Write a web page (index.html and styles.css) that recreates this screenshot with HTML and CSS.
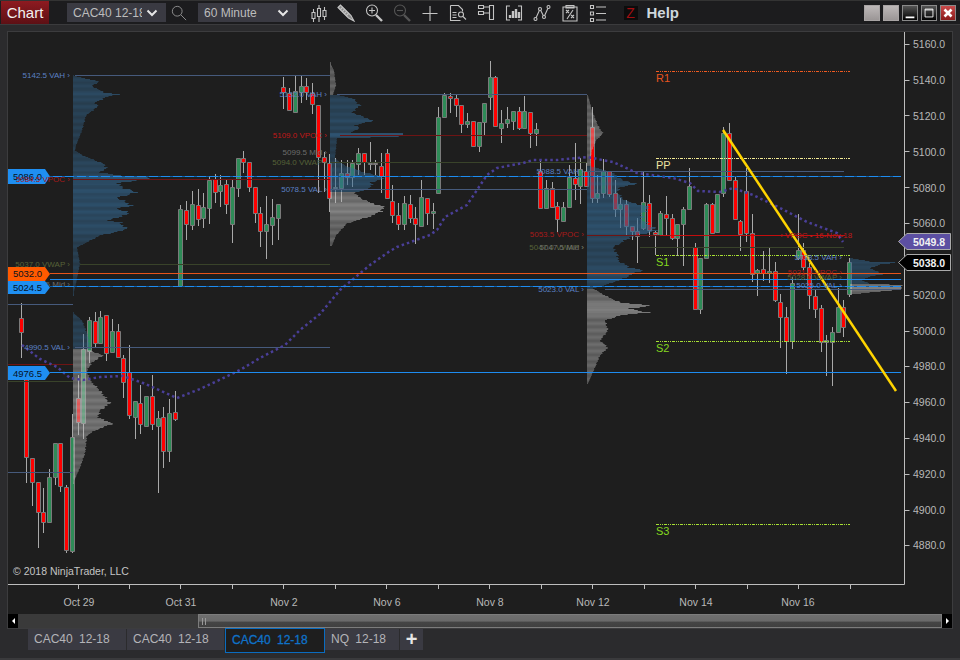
FILE: index.html
```html
<!DOCTYPE html>
<html lang="en">
<head>
<meta charset="utf-8">
<title>Chart</title>
<link rel="stylesheet" href="styles.css">
</head>
<body>
<div class="app">
  <header class="titlebar">
    <div class="brand">Chart</div>
    <div class="select sel-inst"><span class="sel-text">CAC40 12-18</span><svg class="chev" viewBox="0 0 12 8"><path d="M1.5 1.5 6 6l4.500-4.500"/></svg></div>
    <svg class="ico search" viewBox="0 0 18 18"><circle cx="7" cy="7" r="5.500"/><path d="M11 11l6 6"/></svg>
    <div class="select sel-int"><span class="sel-text">60 Minute</span><svg class="chev" viewBox="0 0 12 8"><path d="M1.5 1.5 6 6l4.500-4.500"/></svg></div>
    <div class="tools">
      <svg class="ico" viewBox="0 0 18 18"><path d="M4.500 5v13M10 1v17M15.500 3v13"/><path class="bg" d="M3 8.500h3v6H3zM8.500 4.500h3v8h-3zM14 6.500h3v6h-3z"/></svg>
      <svg class="ico" viewBox="0 0 18 18"><path class="pen" d="M1 3.500 3.500 1 14 11.500 17 17l-5.500-3z"/><path d="M3 6l3-3M5 8l3-3M7 10l3-3M9 12l3-3"/></svg>
      <svg class="ico" viewBox="0 0 18 18"><circle cx="7" cy="6.500" r="5.500"/><path d="M4 6.500h6M7 3.500v6"/><path class="thick" d="M11 11l6 6"/></svg>
      <svg class="ico dim" viewBox="0 0 18 18"><circle cx="7" cy="6.500" r="5.500"/><path d="M4 6.500h6"/><path class="thick" d="M11 11l6 6"/></svg>
      <svg class="ico" viewBox="0 0 18 18"><path d="M1.500 9.500h15M9 2v15"/></svg>
      <svg class="ico" viewBox="0 0 18 18"><path d="M1.500 1.500h8l4 4v2M1.500 1.500v15h10M3.500 8.500h4M3.500 11h4M3.500 13.500h4"/><circle cx="12" cy="10.500" r="2.500"/><path d="M14 12.500l3 3"/></svg>
      <svg class="ico" viewBox="0 0 18 18"><path d="M1.500 1.500h5v3h-5zM1.500 7.500h5v3h-5zM6.500 3h6M6.500 9h6M12.500 1.500h4v14h-4z"/></svg>
      <svg class="ico" viewBox="0 0 18 18"><path d="M5 2H1.500v14H5M13 2h3.500v14H13"/><path class="thick" d="M5 14v-3M8 14V7M11 14V5M14 14V8"/></svg>
      <svg class="ico" viewBox="0 0 18 18"><path d="M2.500 15 7 5l4 8 4.500-10"/><circle class="bg" cx="2.500" cy="15" r="1.500"/><circle class="bg" cx="7" cy="5" r="1.500"/><circle class="bg" cx="11" cy="13" r="1.500"/><circle class="bg" cx="15.500" cy="3" r="1.500"/></svg>
      <svg class="ico" viewBox="0 0 18 18"><path d="M2 3h14v14H2zM5 1.500h8V4H5zM5 6l3 3M8 6 5 9M10 11l3 3M13 11l-3 3M12 6l-6 9"/></svg>
      <svg class="ico" viewBox="0 0 18 18"><path d="M1.500 1.500h3v3h-3zM1.500 8h3v3h-3zM1.500 14.500h3v3h-3zM7 3h10M7 9.500h10M7 16h10"/></svg>
    </div>
    <div class="zbox">Z</div>
    <div class="help">Help</div>
    <div class="winbtns">
      <span class="wbtn gray"></span>
      <span class="wbtn gray"></span>
      <span class="wbtn dark"><svg viewBox="0 0 16 16"><path class="wmin" d="M3 12h10v2H3z"/></svg></span>
      <span class="wbtn dark"><svg viewBox="0 0 16 16"><path class="wmax" d="M3.500 3.500h9v9h-9zM3.500 4.500h9"/></svg></span>
      <span class="wbtn red"><svg viewBox="0 0 16 16"><path class="wx" d="M4 4l8 8M12 4l-8 8"/></svg></span>
    </div>
  </header>

  <section class="panel">
    <svg class="chart" viewBox="8 32 944 582" width="944" height="582">
      <g id="candles"></g>
      <g id="profiles"></g>

      <!-- session levels -->
      <path class="ln vah" d="M75 75.500H330M337 94.500H587M8 304.500H73M8 472.500H73M75 347.500H330M330 189.500H587M587 171.500H844M605 289.500H901"/>
      <path class="ln vpoc" d="M73 179.500H330M340 135.500H587M8 364.500H73M587 235.500H660"/>
      <path class="ln vpoc-live" d="M660 235.500H845"/>
      <path class="ln vwap" d="M80 264.500H330M330 162.500H587M8 381.500H73M640 247.500H844"/>

      <!-- pivots -->
      <path class="piv r1" d="M656 71.500H850"/>
      <path class="piv pp" d="M656 158.500H850"/>
      <path class="piv s" d="M656 255.500H850M656 341.500H850M656 524.500H850"/>
      <text class="pivt r1t" x="656" y="82">R1</text>
      <text class="pivt ppt" x="656" y="169">PP</text>
      <text class="pivt st" x="656" y="266">S1</text>
      <text class="pivt st" x="656" y="352">S2</text>
      <text class="pivt st" x="656" y="535">S3</text>

      <!-- moving average -->
      <path class="sma" d="M22 345 40 359 57 367 70 378 83 380 100 377 123 376 143 383 177 398 200 389 215 382 240 370 260 358 285 345 300 330 320 314 340 290 370 265 390 251 397 247 430 235 437 230 445 217 467 205 477 190 487 175 497 168 523 163 533 160 557 160 587 157 613 162 637 173 673 178 690 183 698 191 720 192 733 188 753 195 780 208 807 222 837 233 843 242"/>

      <!-- labels under the flags -->
      <text class="lbl mid" x="70" y="287">5024.5 Mid ›</text>

      <!-- price lines -->
      <path class="ln blue" d="M50 176.500H901"/>
      <path class="ln bluedash" d="M50 176.500H901"/>
      <path class="ln orange" d="M50 273.500H901"/>
      <path class="ln blue" d="M50 279.500H901"/>
      <path class="ln blue" d="M50 286.500H901"/>
      <path class="ln bluedash" d="M50 286.500H901"/>
      <path class="ln blue" d="M50 372.500H901"/>

      <!-- trend line -->
      <path class="trend" d="M723 130 896 391"/>

      <!-- left flags -->
      <path class="flag fblue" d="M8 169H45L50 176.500 45 184H8z"/>
      <text class="ftext" x="13" y="180">5086.0</text>
      <path class="flag forange" d="M8 267H45L50 274 45 281H8z"/>
      <text class="ftext" x="13" y="277">5032.0</text>
      <path class="flag fblue" d="M8 281H45L50 287.500 45 294H8z"/>
      <text class="ftext" x="13" y="291">5024.5</text>
      <path class="flag fblue" d="M8 366H45L50 373 45 380H8z"/>
      <text class="ftext" x="13" y="377">4976.5</text>

      <!-- profile labels -->
      <text class="lbl val" x="70" y="78">5142.5 VAH ›</text>
      <text class="lbl poc" x="70" y="182">5084.5 VPOC ›</text>
      <text class="lbl wap" x="70" y="267">5037.0 VWAP ›</text>
      <text class="lbl val" x="70" y="350">4990.5 VAL ›</text>
      <text class="lbl val" x="327" y="97">5132.0 VAH ›</text>
      <text class="lbl pocb" x="327" y="138">5109.0 VPOC ›</text>
      <text class="lbl mid" x="327" y="155">5099.5 Mid ›</text>
      <text class="lbl wap" x="327" y="165">5094.0 VWAP ›</text>
      <text class="lbl val" x="327" y="192">5078.5 VAL ›</text>
      <text class="lbl val" x="584" y="174">5088.5 VAH ›</text>
      <text class="lbl poc" x="584" y="237">5053.5 VPOC ›</text>
      <text class="lbl wap" x="584" y="250">5047.0 VWAP ›</text>
      <text class="lbl mid" x="584" y="250">5047.5 Mid ›</text>
      <text class="lbl val" x="584" y="292">5023.0 VAL ›</text>
      <text class="lbl val" x="842" y="260">5038.5 VAH ›</text>
      <text class="lbl poc" x="842" y="275">5031.0 VPOC ›</text>
      <text class="lbl wap" x="842" y="280">5028.0 VWAP ›</text>
      <text class="lbl val" x="842" y="288">5025.0 VAL ›</text>
      <text class="lbl pocb nov" x="780" y="238">‹ VPOC • 16-Nov-18</text>

      <text class="copy" x="13" y="575">© 2018 NinjaTrader, LLC</text>

      <!-- price axis -->
      <path class="axis" d="M904.500 32V584.500H8"/>
      <path class="axis" d="M904.500 44.500h5M904.500 80.500h5M904.500 115.500h5M904.500 151.500h5M904.500 187.500h5M904.500 223.500h5M904.500 295.500h5M904.500 331.500h5M904.500 366.500h5M904.500 402.500h5M904.500 438.500h5M904.500 474.500h5M904.500 510.500h5M904.500 545.500h5"/>
      <text class="ax" x="913" y="48">5160.0</text>
      <text class="ax" x="913" y="84">5140.0</text>
      <text class="ax" x="913" y="120">5120.0</text>
      <text class="ax" x="913" y="156">5100.0</text>
      <text class="ax" x="913" y="192">5080.0</text>
      <text class="ax" x="913" y="227">5060.0</text>
      <text class="ax" x="913" y="299">5020.0</text>
      <text class="ax" x="913" y="335">5000.0</text>
      <text class="ax" x="913" y="370">4980.0</text>
      <text class="ax" x="913" y="406">4960.0</text>
      <text class="ax" x="913" y="442">4940.0</text>
      <text class="ax" x="913" y="478">4920.0</text>
      <text class="ax" x="913" y="514">4900.0</text>
      <text class="ax" x="913" y="549">4880.0</text>

      <!-- right flags -->
      <path class="flag fpurple" d="M907 233.500H950.500V249.500H907L898.500 241.500z"/>
      <text class="fr" x="913" y="245.500">5049.8</text>
      <path class="flag fblack" d="M907 254.500H950.500V270.500H907L898.500 262.500z"/>
      <text class="fr" x="913" y="266.500">5038.0</text>

      <!-- time axis -->
      <path class="axis" d="M78.500 584v5M129.500 584v5M180.500 584v5M232.500 584v5M283.500 584v5M335.500 584v5M386.500 584v5M438.500 584v5M489.500 584v5M541.500 584v5M592.500 584v5M644.500 584v5M695.500 584v5M747.500 584v5M798.500 584v5M850.500 584v5"/>
      <text class="tx" x="79" y="606">Oct 29</text>
      <text class="tx" x="181" y="606">Oct 31</text>
      <text class="tx" x="284" y="606">Nov 2</text>
      <text class="tx" x="387" y="606">Nov 6</text>
      <text class="tx" x="490" y="606">Nov 8</text>
      <text class="tx" x="593" y="606">Nov 12</text>
      <text class="tx" x="696" y="606">Nov 14</text>
      <text class="tx" x="798" y="606">Nov 16</text>
    </svg>
    <div class="scrollbar">
      <span class="sbtn"><i class="tri-l"></i></span>
      <span class="track"></span>
      <span class="thumb"><i class="grip"></i></span>
      <span class="sbtn"><i class="tri-r"></i></span>
    </div>
  </section>

  <nav class="tabs">
    <div class="tab t1">CAC40 12-18</div>
    <div class="tab t2">CAC40 12-18</div>
    <div class="tab t3 active">CAC40 12-18</div>
    <div class="tab t4">NQ 12-18</div>
    <div class="tab add">+</div>
  </nav>
</div>
<script src="chart.js"></script>
</body>
</html>
```

FILE: styles.css
```css
* { box-sizing: border-box; }
html, body { margin: 0; padding: 0; }
body { width: 960px; height: 660px; overflow: hidden; background: #2b2b2d; font-family: "Liberation Sans", Arial, sans-serif; }
.app { display: flex; flex-direction: column; width: 960px; height: 660px; border-bottom: 2px solid #3a3a3c; }

.titlebar { display: flex; align-items: center; height: 25px; background: #1c1c1e; border-top: 1px solid #333; border-bottom: 1px solid #3b3b3d; padding-left: 1px; flex: none; }
.brand { width: 48px; height: 23px; background: linear-gradient(#8e1a20, #5d1015); color: #f2f2f2; font-size: 15px; line-height: 23px; text-align: center; }
.select { display: flex; align-items: center; justify-content: space-between; width: 99px; height: 19px; background: #3a3a42; color: #bdbdbd; font-size: 12px; padding: 0 6px; }
.sel-inst { margin-left: 18px; }
.sel-int { margin-left: 11px; }
.sel-text { display: block; width: 69px; overflow: hidden; white-space: nowrap; }
.chev { width: 12px; height: 8px; flex: none; margin-right: 2px; }
.chev path { fill: none; stroke: #e6e6e6; stroke-width: 2; }

.ico { width: 18px; height: 18px; flex: none; }
.ico path, .ico circle { fill: none; stroke: #c4c4c4; stroke-width: 1.1; }
.ico .bg { fill: #1c1c1e; }
.ico .pen { fill: #8b8b8b; }
.ico .thick { stroke-width: 2.4; }
.ico.dim path, .ico.dim circle { stroke: #555; }
.search { width: 16px; height: 16px; margin-left: 5px; }
.search path, .search circle { stroke: #8c8c8c; }
.tools { display: flex; gap: 10px; margin-left: 11.5px; }

.zbox { width: 14px; height: 14px; margin-left: 17px; background: #0c0c0c; color: #a00f12; font-size: 14px; line-height: 14px; text-align: center; }
.help { margin-left: 9px; color: #cfd7dd; font-size: 15px; font-weight: bold; }
.winbtns { display: flex; gap: 3px; margin-left: auto; margin-right: 4px; }
.wbtn { display: block; width: 16px; height: 16px; border: 1px solid #8a8a8a; }
.wbtn svg { display: block; width: 14px; height: 14px; }
.gray { background: linear-gradient(#bdb8b8, #9b9696); border-color: #a8a4a4; }
.dark { background: linear-gradient(#555, #000); }
.red { background: linear-gradient(#c94a4a, #8a1c1c); }
.wmin { fill: #fff; }
.wmax { fill: none; stroke: #fff; stroke-width: 1; }
.wx { fill: none; stroke: #fff; stroke-width: 3; }

.panel { margin: 6px 7px 0 7px; border: 1px solid #3c3c3e; background: #1e1e1e; height: 598px; flex: none; display: flex; flex-direction: column; }
.chart { display: block; width: 944px; height: 582px; flex: none; }
.scrollbar { display: flex; height: 14px; background: #3a3a3a; flex: none; }
.sbtn { display: flex; align-items: center; justify-content: center; width: 10px; background: #000; flex: none; }
.tri-l, .tri-r { display: block; width: 0; height: 0; border-top: 3px solid transparent; border-bottom: 3px solid transparent; }
.tri-l { border-right: 3px solid #fff; }
.tri-r { border-left: 3px solid #fff; }
.track { width: 180px; flex: none; }
.thumb { flex: 1; background: linear-gradient(#6f6f6f, #6a6a6a 50%, #454545 60%, #404040); border: 1px solid #7c7c7c; position: relative; }
.grip { position: absolute; left: 3px; top: 3px; width: 4px; height: 7px; border-left: 1px solid #999; border-right: 1px solid #999; }

.tabs { display: flex; align-items: flex-start; gap: 1px; padding-left: 28px; }
.tab { height: 21px; background: #3a3a42; color: #b4b4b8; font-size: 12px; line-height: 21px; padding-left: 6px; white-space: nowrap; word-spacing: 3px; }
.t1 { width: 98px; }
.t2 { width: 97px; }
.t3 { width: 100px; }
.t4 { width: 74px; margin-left: -1px; }
.active { height: 25px; margin-top: -1px; background: #1e1e1e; border: 1px solid #0a6cc0; color: #0f72c8; line-height: 22px; -webkit-text-stroke: .3px #0f72c8; }
.add { width: 23px; padding: 0; text-align: center; color: #e6e6e6; font-size: 20px; font-weight: bold; }

/* chart drawing */
.wick { fill: none; stroke: #a9a9a9; stroke-width: 1; }
.up { fill: #2e8b57; stroke: #7a7a7a; stroke-width: 1; }
.dn { fill: #ff0000; stroke: #7a7a7a; stroke-width: 1; }
.pblue { fill: #356a94; }
.pgray { fill: #bcbcbc; }
.ln { fill: none; stroke-width: 1; }
.vah { stroke: #465a7c; }
.vpoc { stroke: #6e1414; }
.vpoc-live { stroke: #c40d0d; }
.vwap { stroke: #39432a; }
.blue { stroke: #1e8cf0; }
.bluedash { stroke: #0d5fa8; stroke-dasharray: 3 9; }
.orange { stroke: #e8541a; }
.piv { fill: none; stroke-width: 1; stroke-dasharray: 3 1 1 1 1 1; }
.r1 { stroke: #f05a20; }
.pp { stroke: #f4ec94; }
.s { stroke: #a8e034; }
.pivt { font-size: 11px; font-family: "Liberation Sans", Arial, sans-serif; }
.r1t { fill: #e8541e; }
.ppt { fill: #eee2a0; }
.st { fill: #84d61e; }
.sma { fill: none; stroke: #4a3f98; stroke-width: 2.5; stroke-dasharray: 2.500 3; }
.trend { fill: none; stroke: #ffd400; stroke-width: 2.5; }
.lbl { font-size: 8px; text-anchor: end; font-family: "Liberation Sans", Arial, sans-serif; }
.nov { text-anchor: start; }
.val { fill: #5b80c4; }
.poc { fill: #a81a1a; }
.pocb { fill: #c01818; }
.wap { fill: #566238; }
.mid { fill: #6c6c6c; }
.flag { stroke: none; }
.fblue { fill: #1f8ff2; }
.forange { fill: #ff5a00; }
.fpurple { fill: #5c4fa2; stroke: #aaa; }
.fblack { fill: #000; stroke: #aaa; }
.ftext { font-size: 9.500px; fill: #06121f; font-family: "Liberation Sans", Arial, sans-serif; }
.fr { font-size: 10.500px; font-weight: bold; fill: #f2f2f2; font-family: "Liberation Sans", Arial, sans-serif; }
.axis { fill: none; stroke: #bdbdbd; stroke-width: 1; }
.ax { font-size: 10.500px; fill: #b8b8b8; font-family: "Liberation Sans", Arial, sans-serif; }
.tx { font-size: 10.500px; fill: #b8b8b8; text-anchor: middle; font-family: "Liberation Sans", Arial, sans-serif; }
.copy { font-size: 10.500px; fill: #c4c4c4; font-family: "Liberation Sans", Arial, sans-serif; }
```

FILE: chart.js
```js
// x, direction (1 up/green, 0 down/red), wick top, body top, body bottom, wick bottom
var BARS = [
[21,0,303,318,332,358],[26,0,375,378,457,483],[32,0,458,458,482,506],[38,0,482,482,512,548],[43,0,488,512,522,533],[49,1,469,477,522,522],[55,1,443,443,477,485],[60,0,443,443,486,492],[66,0,485,487,550,553],[72,1,414,437,551,553],[78,0,375,398,422,435],[83,1,334,349,423,439],[89,1,317,320,351,363],[95,0,312,321,343,347],[100,1,311,317,343,343],[106,0,315,315,353,361],[112,1,319,331,352,352],[118,0,324,331,357,357],[123,0,355,358,382,398],[129,0,345,372,415,419],[135,1,401,401,417,439],[140,0,385,403,424,434],[146,1,396,396,426,426],[152,0,375,396,424,430],[158,1,411,418,426,493],[163,0,407,417,451,468],[169,1,399,413,451,462],[175,0,391,412,419,421],
[180,1,205,209,286,287],[186,0,201,210,224,240],[192,1,191,204,225,230],[198,0,189,205,219,226],[203,1,193,207,218,228],[209,1,177,180,208,224],[215,0,174,179,192,203],[220,1,175,185,191,207],[226,0,180,184,204,214],[232,1,180,187,224,243],[238,1,158,158,188,197],[243,0,151,158,162,173],[249,0,162,162,187,192],[255,0,187,187,213,223],[260,0,207,213,231,247],[266,1,196,224,231,259],[272,1,199,217,225,245],[278,1,204,204,218,240],
[283,0,77,87,92,109],[289,0,88,93,110,110],[295,1,76,91,112,112],[301,1,76,86,92,103],[306,0,78,86,92,100],[312,0,83,93,104,114],[318,0,105,105,157,193],[324,0,152,157,162,192],[329,0,154,163,198,212],[335,1,158,187,188,203],[341,1,160,173,188,202],[347,0,160,173,177,185],[352,1,160,163,177,187],[358,1,148,153,164,175],[364,0,153,153,162,175],[370,1,142,163,164,170],[375,0,160,163,164,175],[381,0,153,166,176,193],[387,0,149,153,198,198],[392,0,185,201,215,223],[398,0,203,215,224,230],[404,1,196,203,224,230],[410,0,195,204,218,223],[415,0,207,218,224,244],[421,1,180,197,226,226],[427,0,198,198,213,225],[433,1,203,211,213,229],
[438,1,107,117,193,194],[444,1,93,95,117,118],[450,0,93,96,98,113],[456,0,95,98,105,117],[461,0,105,105,124,133],[467,1,113,121,124,128],[473,0,121,121,146,147],[479,1,122,122,146,152],[484,1,103,103,122,135],[490,1,61,77,97,110],[495,0,76,77,126,126],[501,1,110,123,128,143],[507,1,107,119,123,128],[513,1,111,111,121,130],[519,0,107,111,128,130],[524,1,96,111,128,128],[530,0,112,112,133,148],[536,1,123,129,133,146],
[540,0,161,171,208,209],[546,1,180,188,208,208],[552,0,182,188,207,208],[557,0,202,206,219,232],[563,1,202,207,221,222],[569,1,165,177,207,208],[575,0,143,178,184,200],[580,1,158,169,186,204],[586,0,162,171,186,186],[592,0,107,127,198,203],[597,1,175,193,198,203],[603,1,159,171,193,198],[609,0,171,171,194,197],[615,0,180,193,209,217],[620,1,198,204,209,228],[626,0,200,204,226,235],[632,0,226,226,231,240],[637,0,218,231,236,263],[643,1,171,202,228,230],[649,0,195,203,230,237],[655,0,231,232,234,255],[660,1,211,213,235,236],[666,0,196,214,218,235],[672,0,214,218,238,240],[677,1,224,224,238,256],[683,1,207,209,224,266],[689,1,168,186,209,210],[695,0,243,247,309,309],[700,1,258,258,309,314],
[706,1,203,204,258,258],[712,0,203,204,233,234],[717,1,194,194,232,232],[723,1,127,133,193,197],[729,0,123,133,180,180],[735,0,177,180,219,220],[740,0,220,221,234,251],[746,0,168,191,233,242],[752,0,214,233,274,282],[757,1,269,270,273,296],[763,0,251,269,273,281],[769,1,247,271,273,283],[775,0,262,271,300,302],[780,0,294,302,317,348],[786,0,307,317,341,374],[792,1,277,283,341,349],[798,1,214,250,258,260],[803,0,243,250,267,270],[809,0,263,267,295,309],[815,0,290,296,309,318],[821,0,305,308,342,352],[826,1,335,340,342,376],[832,1,327,332,342,386],[838,1,288,307,332,332],[843,0,300,307,327,337],[849,1,258,262,294,297]
];

// each entry: baseline x, class, [y, right edge] control points
var PROFILES = [
 [73,'pblue',[[75,73],[78,85],[81,100],[85,92],[88,96],[92,105],[94,118],[96,108],[102,95],[106,98],[115,86],[130,82],[145,76],[150,75],[155,83],[163,103],[167,107],[172,100],[175,120],[177,152],[180,137],[183,117],[188,125],[192,137],[197,117],[205,132],[208,117],[213,130],[220,108],[222,120],[229,127],[235,100],[247,77],[263,80],[283,76],[295,73]]],
 [73,'pblue',[[312,73],[320,82],[335,88],[348,90]]],
 [73,'pgray',[[349,88],[355,103],[362,92],[370,87],[380,90],[390,100],[403,110],[410,100],[417,98],[423,113],[430,95],[435,87],[453,85],[467,80],[483,73]]],
 [330,'pgray',[[62,330],[70,334],[85,336],[94,333]]],
 [330,'pblue',[[95,340],[98,353],[105,360],[112,352],[120,373],[125,355],[128,360],[132,350],[133,406],[136,400],[138,337],[158,335],[165,345],[172,365],[177,385],[182,372],[188,370],[191,360]]],
 [330,'pgray',[[192,355],[195,357],[200,365],[207,385],[211,380],[215,373],[223,347],[235,336],[245,332]]],
 [587,'pgray',[[95,588],[110,592],[125,598],[133,603],[140,596],[150,592],[165,590]]],
 [587,'pblue',[[166,592],[172,612],[180,623],[183,637],[187,620],[192,617],[200,625],[207,650],[213,642],[220,643],[225,650],[230,657],[234,640],[237,630],[247,613],[255,618],[260,618],[267,630],[270,643],[274,630],[277,627],[283,610],[288,593]]],
 [587,'pgray',[[289,595],[295,605],[302,620],[305,652],[308,630],[312,647],[315,620],[320,605],[330,608],[340,600],[347,608],[355,600],[367,595],[383,588]]],
 [850,'pblue',[[258,853],[261,870],[262,897],[264,880],[268,870],[272,880],[273,887],[276,870],[280,862],[283,870]]],
 [850,'pgray',[[284,890],[285,900],[288,902],[290,890],[292,870],[294,852]]]
];

function edgeAt(points, y) {
  for (var i = 0; i < points.length - 1; i++) {
    var a = points[i], b = points[i + 1];
    if (y >= a[0] && y <= b[0]) {
      return b[0] === a[0] ? a[1] : a[1] + (b[1] - a[1]) * (y - a[0]) / (b[0] - a[0]);
    }
  }
  return null;
}

function svgEl(name, attrs) {
  var el = document.createElementNS('http://www.w3.org/2000/svg', name);
  for (var k in attrs) el.setAttribute(k, attrs[k]);
  return el;
}

function drawCandles() {
  var wick = '', up = '', dn = '';
  BARS.forEach(function (b) {
    var x = b[0];
    wick += 'M' + (x + 0.5) + ' ' + b[2] + 'V' + b[5];
    var body = 'M' + (x - 1.5) + ' ' + (b[3] + 0.5) + 'h4V' + (b[4] + 0.5) + 'h-4z';
    if (b[1]) up += body; else dn += body;
  });
  var g = document.getElementById('candles');
  g.appendChild(svgEl('path', { 'class': 'wick', d: wick }));
  g.appendChild(svgEl('path', { 'class': 'up', d: up }));
  g.appendChild(svgEl('path', { 'class': 'dn', d: dn }));
}

function drawProfiles() {
  var g = document.getElementById('profiles');
  PROFILES.forEach(function (p) {
    var x0 = p[0], pts = p[2];
    for (var y = pts[0][0]; y <= pts[pts.length - 1][0]; y++) {
      var edge = edgeAt(pts, y);
      if (edge === null) continue;
      var w = (edge - x0) * (1 + 0.035 * Math.sin(y * 2.3) + 0.025 * Math.sin(y * 5.1));
      if (w < 1) w = 1;
      var op = 0.38 + Math.min(w / 80, 1) * 0.3 + 0.05 * Math.sin(y * 0.9);
      g.appendChild(svgEl('rect', { 'class': p[1], x: x0, y: y, width: w.toFixed(1), height: 1, opacity: op.toFixed(2) }));
    }
  });
}

drawCandles();
drawProfiles();
```
